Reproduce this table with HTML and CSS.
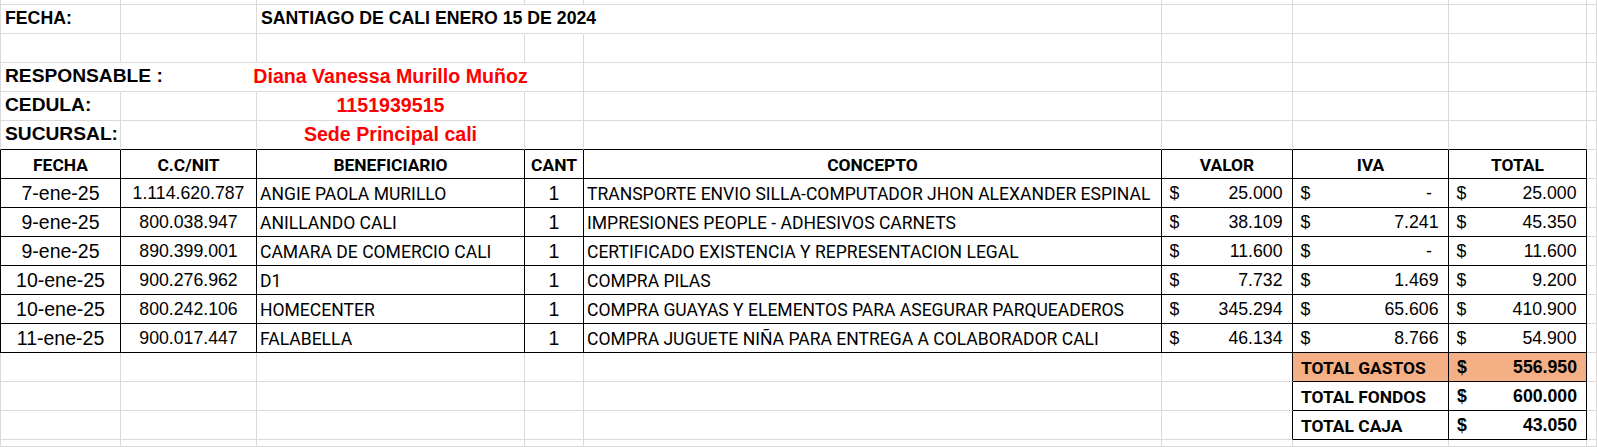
FILE: index.html
```html
<!DOCTYPE html>
<html lang="es">
<head>
<meta charset="utf-8">
<title>Caja menor</title>
<link rel="stylesheet" href="styles.css">
</head>
<body>
<div class="sheet">
  <div class="row partial">
    <div class="c"></div><div class="c"></div><div class="c"></div><div class="c"></div><div class="c"></div><div class="c"></div><div class="c"></div><div class="c"></div><div class="c"></div>
  </div>
  <div class="row">
    <div class="c lbl small">FECHA:</div><div class="c"></div><div class="c nr lbl small">SANTIAGO DE CALI ENERO 15 DE 2024</div><div class="c nr"></div><div class="c"></div><div class="c"></div><div class="c"></div><div class="c"></div><div class="c"></div>
  </div>
  <div class="row">
    <div class="c"></div><div class="c"></div><div class="c"></div><div class="c"></div><div class="c"></div><div class="c"></div><div class="c"></div><div class="c"></div><div class="c"></div>
  </div>
  <div class="row">
    <div class="c nr lbl">RESPONSABLE :</div><div class="c nr"></div><div class="c nr red">Diana Vanessa Murillo Muñoz</div><div class="c"></div><div class="c"></div><div class="c"></div><div class="c"></div><div class="c"></div><div class="c"></div>
  </div>
  <div class="row">
    <div class="c lbl">CEDULA:</div><div class="c"></div><div class="c red">1151939515</div><div class="c"></div><div class="c"></div><div class="c"></div><div class="c"></div><div class="c"></div><div class="c"></div>
  </div>
  <div class="row">
    <div class="c tb lbl">SUCURSAL:</div><div class="c tb"></div><div class="c tb red">Sede Principal cali</div><div class="c tb"></div><div class="c tb"></div><div class="c tb"></div><div class="c tb"></div><div class="c tb"></div><div class="c"></div>
  </div>

  <div class="row">
    <div class="c k th">FECHA</div><div class="c k th">C.C/NIT</div><div class="c k th">BENEFICIARIO</div><div class="c k th">CANT</div><div class="c k th">CONCEPTO</div><div class="c k th">VALOR</div><div class="c k th">IVA</div><div class="c k th">TOTAL</div><div class="c"></div>
  </div>
  <div class="row">
    <div class="c k d">7-ene-25</div><div class="c k n">1.114.620.787</div><div class="c k t">ANGIE PAOLA MURILLO</div><div class="c k q">1</div><div class="c k t">TRANSPORTE ENVIO SILLA-COMPUTADOR JHON ALEXANDER ESPINAL</div>
    <div class="c k acc"><span>$</span><span>25.000</span></div><div class="c k acc"><span>$</span><span class="dash">-</span></div><div class="c k acc"><span>$</span><span>25.000</span></div><div class="c"></div>
  </div>
  <div class="row">
    <div class="c k d">9-ene-25</div><div class="c k n">800.038.947</div><div class="c k t">ANILLANDO CALI</div><div class="c k q">1</div><div class="c k t">IMPRESIONES PEOPLE - ADHESIVOS CARNETS</div>
    <div class="c k acc"><span>$</span><span>38.109</span></div><div class="c k acc"><span>$</span><span>7.241</span></div><div class="c k acc"><span>$</span><span>45.350</span></div><div class="c"></div>
  </div>
  <div class="row">
    <div class="c k d">9-ene-25</div><div class="c k n">890.399.001</div><div class="c k t">CAMARA DE COMERCIO CALI</div><div class="c k q">1</div><div class="c k t">CERTIFICADO EXISTENCIA Y REPRESENTACION LEGAL</div>
    <div class="c k acc"><span>$</span><span>11.600</span></div><div class="c k acc"><span>$</span><span class="dash">-</span></div><div class="c k acc"><span>$</span><span>11.600</span></div><div class="c"></div>
  </div>
  <div class="row">
    <div class="c k d">10-ene-25</div><div class="c k n">900.276.962</div><div class="c k t">D1</div><div class="c k q">1</div><div class="c k t">COMPRA PILAS</div>
    <div class="c k acc"><span>$</span><span>7.732</span></div><div class="c k acc"><span>$</span><span>1.469</span></div><div class="c k acc"><span>$</span><span>9.200</span></div><div class="c"></div>
  </div>
  <div class="row">
    <div class="c k d">10-ene-25</div><div class="c k n">800.242.106</div><div class="c k t">HOMECENTER</div><div class="c k q">1</div><div class="c k t">COMPRA GUAYAS Y ELEMENTOS PARA ASEGURAR PARQUEADEROS</div>
    <div class="c k acc"><span>$</span><span>345.294</span></div><div class="c k acc"><span>$</span><span>65.606</span></div><div class="c k acc"><span>$</span><span>410.900</span></div><div class="c"></div>
  </div>
  <div class="row">
    <div class="c k d">11-ene-25</div><div class="c k n">900.017.447</div><div class="c k t">FALABELLA</div><div class="c k q">1</div><div class="c k t">COMPRA JUGUETE NIÑA PARA ENTREGA A COLABORADOR CALI</div>
    <div class="c k acc"><span>$</span><span>46.134</span></div><div class="c k acc"><span>$</span><span>8.766</span></div><div class="c k acc"><span>$</span><span>54.900</span></div><div class="c"></div>
  </div>

  <div class="row">
    <div class="c"></div><div class="c"></div><div class="c"></div><div class="c"></div><div class="c"></div><div class="c kr"></div>
    <div class="c k og tl">TOTAL GASTOS</div><div class="c k og acc tv"><span>$</span><span>556.950</span></div><div class="c"></div>
  </div>
  <div class="row">
    <div class="c"></div><div class="c"></div><div class="c"></div><div class="c"></div><div class="c"></div><div class="c kr"></div>
    <div class="c k tl">TOTAL FONDOS</div><div class="c k acc tv"><span>$</span><span>600.000</span></div><div class="c"></div>
  </div>
  <div class="row">
    <div class="c"></div><div class="c"></div><div class="c"></div><div class="c"></div><div class="c"></div><div class="c kr"></div>
    <div class="c k tl">TOTAL CAJA</div><div class="c k acc tv"><span>$</span><span>43.050</span></div><div class="c"></div>
  </div>
  <div class="row tail">
    <div class="c"></div><div class="c"></div><div class="c"></div><div class="c"></div><div class="c"></div><div class="c"></div><div class="c"></div><div class="c"></div><div class="c"></div>
  </div>
</div>
</body>
</html>
```

FILE: styles.css
```css
:root {
  --grid: #dadada;
  --cols: 121px 136px 268px 59px 578px 131px 156px 138px 1fr;
}

html, body {
  margin: 0;
  background: #ffffff;
  overflow: hidden;
}

body {
  font-family: "Liberation Sans", Arial, sans-serif;
  font-size: 17.7px;
  color: #000000;
}

.sheet {
  width: 1597px;
}

.row {
  display: grid;
  grid-template-columns: var(--cols);
  height: 29px;
}

.row.partial { height: 5px; }
.row.tail { height: 7px; }

.c {
  box-sizing: border-box;
  min-width: 0;
  display: flex;
  align-items: flex-end;
  padding: 0 3px 3px;
  white-space: nowrap;
  border-right: 1px solid var(--grid);
  border-bottom: 1px solid var(--grid);
}

.c:first-child { border-left: 1px solid var(--grid); }

.nr { border-right-color: transparent; }
.tb { border-bottom-color: #000; }
.k { border-right-color: #000; border-bottom-color: #000; }
.c.k:first-child { border-left-color: #000; }
.kr { border-right-color: #000; }

/* header block */
.lbl {
  font-weight: bold;
  font-size: 19.2px;
  padding-left: 4px;
  padding-bottom: 4px;
}
.lbl.small { font-size: 17.7px; }

.red {
  color: #ff0000;
  font-weight: bold;
  font-size: 19.6px;
  justify-content: center;
  padding-bottom: 3px;
}

/* table */
.th {
  justify-content: center;
  font-family: Roboto, "Liberation Sans", sans-serif;
  font-weight: bold;
  font-size: 17.4px;
}

.d {
  justify-content: center;
  font-size: 19.5px;
  padding-bottom: 2px;
}

.n { justify-content: center; }

.t {
  font-family: Roboto, "Liberation Sans", sans-serif;
  font-size: 17.55px;
}

.q {
  justify-content: center;
  font-size: 19.5px;
  padding-bottom: 2px;
}

.acc {
  justify-content: space-between;
  padding: 0 9.5px 3px 7.5px;
}

.dash { margin-right: 6.5px; }

/* totals */
.og { background: #f4b084; }

.tl {
  font-family: Roboto, "Liberation Sans", sans-serif;
  font-weight: bold;
  font-size: 17.4px;
  padding-left: 8px;
}

.tv {
  font-weight: bold;
  padding-left: 8px;
  padding-right: 9px;
}
```
